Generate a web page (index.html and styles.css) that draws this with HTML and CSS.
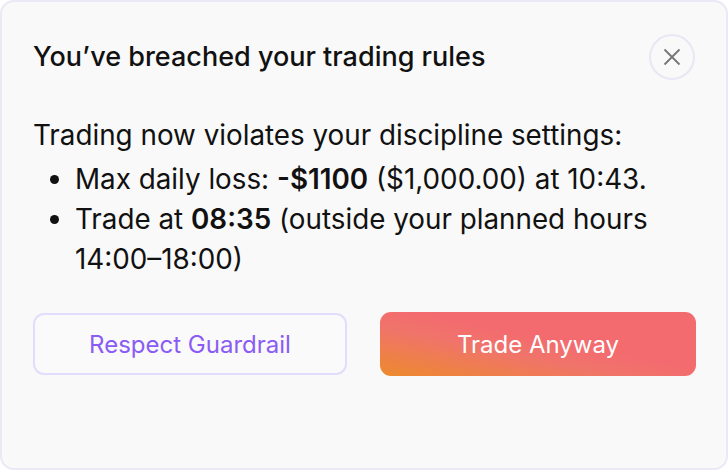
FILE: index.html
```html
<!DOCTYPE html>
<html lang="en">
<head>
<meta charset="utf-8">
<title>Breached trading rules</title>
<link rel="stylesheet" href="styles.css">
</head>
<body>
<div class="card">
  <div class="header">
    <h2 class="title">You’ve breached your trading rules</h2>
    <button class="close" aria-label="Close">
      <svg width="18" height="18" viewBox="0 0 18 18"><path d="M1.5 1.5 L16.5 16.5 M16.5 1.5 L1.5 16.5" stroke="#767676" stroke-width="1.8" fill="none" stroke-linecap="butt"/></svg>
    </button>
  </div>
  <div class="body">
    <p class="lead">Trading now violates your discipline settings:</p>
    <ul class="rules">
      <li>Max daily loss: <strong>-$1100</strong> ($1,000.00) at 10:43.</li>
      <li>Trade at <strong>08:35</strong> (outside your planned hours 14:00–18:00)</li>
    </ul>
  </div>
  <div class="actions">
    <button class="btn btn-outline">Respect Guardrail</button>
    <button class="btn btn-primary">Trade Anyway</button>
  </div>
</div>
</body>
</html>
```
FILE: styles.css
```css
* { box-sizing: border-box; }
html, body { margin: 0; padding: 0; background: #ffffff; }
body { font-family: Inter, "Noto Sans", sans-serif; color: #111111; }
.card {
  width: 728px;
  height: 470px;
  border: 2px solid #ebe9f5;
  border-radius: 14px;
  background: #f9f9f9;
  padding: 32px 30px 0 31px;
}
.header {
  display: flex;
  align-items: center;
  justify-content: space-between;
  height: 46px;
}
.title {
  margin: 0;
  font-size: 27px;
  font-weight: 500;
  line-height: 32px;
  color: #111111;
}
.close {
  width: 46px;
  height: 46px;
  border-radius: 50%;
  border: 2px solid #e9e7f4;
  background: transparent;
  display: flex;
  align-items: center;
  justify-content: center;
  padding: 0;
  margin-right: 1px;
}
.body {
  margin-top: 35px;
  font-size: 27.8px;
  line-height: 40px;
}
.lead { margin: 0 0 4px 0; }
.rules {
  margin: 0;
  padding-left: 42px;
}
.rules strong { font-weight: 600; }
.actions {
  display: flex;
  gap: 33px;
  margin-top: 33px;
}
.btn {
  height: 64px;
  border-radius: 11px;
  font-family: Inter, "Noto Sans", sans-serif;
  font-size: 24px;
  font-weight: 400;
}
.btn-outline {
  width: 314px;
  flex: none;
  background: #fafafa;
  border: 2px solid #e3dcfc;
  color: #8a5cf5;
  height: 62px;
  margin-top: 1px;
}
.btn-primary {
  flex: 1;
  border: none;
  color: #ffffff;
  background: linear-gradient(to top right, #ec8a2c 0%, #f0746a 38%, #f36b6f 55%, #f36b6f 100%);
}
```
